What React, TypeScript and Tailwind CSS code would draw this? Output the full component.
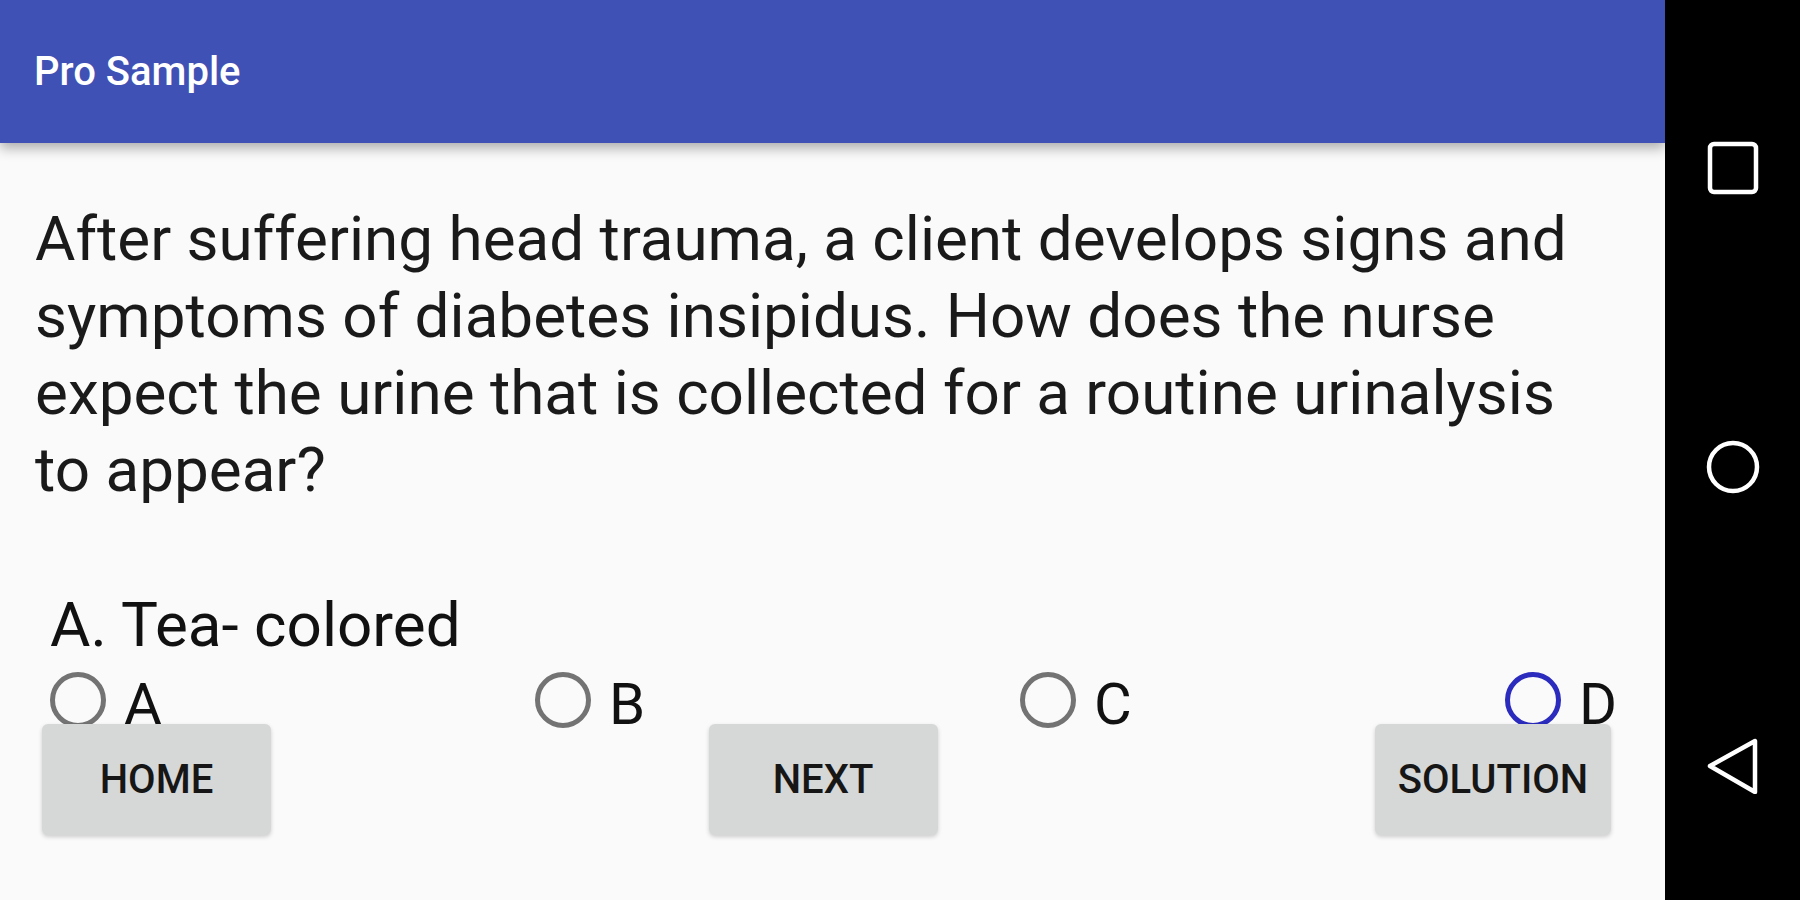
import React from "react";

const choices = ["A", "B", "C", "D"];

function Radio({ label, active }: { label: string; active?: boolean }) {
  return (
    <div className="flex w-[485px] shrink-0 items-center">
      <span
        className={
          active
            ? "h-[56px] w-[56px] shrink-0 rounded-full border-[5px] border-[#2b2bbd]"
            : "h-[56px] w-[56px] shrink-0 rounded-full border-[5px] border-[#737373]"
        }
      />
      <span className="ml-[18px] mt-[8px] text-[58px] leading-none text-[#111]">{label}</span>
    </div>
  );
}

function Button({ text }: { text: string }) {
  return (
    <button className="relative z-10 flex h-[111px] w-full items-center justify-center rounded-[6px] bg-[#d6d7d7] text-[40px] font-medium uppercase leading-none text-[#161616] shadow-[0_2px_4px_rgba(0,0,0,0.18)]">
      {text}
    </button>
  );
}

export default function App() {
  return (
    <div className="flex h-[900px] w-[1800px] overflow-hidden font-['Roboto',sans-serif]">
      <div className="flex w-[1665px] shrink-0 flex-col bg-[#fafafa]">
        <header className="relative z-20 flex h-[143px] shrink-0 items-center bg-[#3f51b5] pl-[34px] shadow-[0_5px_12px_rgba(0,0,0,0.32)]">
          <h1 className="text-[40px] font-medium leading-none text-white">Pro Sample</h1>
        </header>

        <p className="pl-[35px] pr-[50px] pt-[57px] text-[62px] leading-[77px] text-[#1a1a1a]">
          After suffering head trauma, a client develops signs and symptoms of diabetes insipidus. How does the nurse expect the urine that is collected for a routine urinalysis to appear?
        </p>

        <p className="mt-[78px] pl-[50px] text-[62px] leading-[77px] text-[#111]">A. Tea- colored</p>

        <div className="mt-[6px] flex h-[62px] items-center pl-[50px]">
          {choices.map((c) => (
            <Radio key={c} label={c} active={c === "D"} />
          ))}
        </div>

        <div className="mt-[-7px] flex justify-between pl-[42px] pr-[54px]">
          <div className="w-[229px]">
            <Button text="Home" />
          </div>
          <div className="w-[229px]">
            <Button text="Next" />
          </div>
          <div className="w-[236px]">
            <Button text="Solution" />
          </div>
        </div>
      </div>

      <nav className="flex flex-1 flex-col items-center gap-[243px] bg-black pt-[140px]">
        <svg width="56" height="56" viewBox="0 0 56 56" fill="none">
          <rect x="5" y="4" width="46" height="48" rx="4" stroke="white" strokeWidth="4.5" />
        </svg>
        <svg width="56" height="56" viewBox="0 0 56 56" fill="none">
          <circle cx="28" cy="28" r="24" stroke="white" strokeWidth="4.5" />
        </svg>
        <svg width="56" height="56" viewBox="0 0 56 56" fill="none">
          <path d="M5 28 L50 3 L50 54 Z" stroke="white" strokeWidth="4.5" strokeLinejoin="round" />
        </svg>
      </nav>
    </div>
  );
}
